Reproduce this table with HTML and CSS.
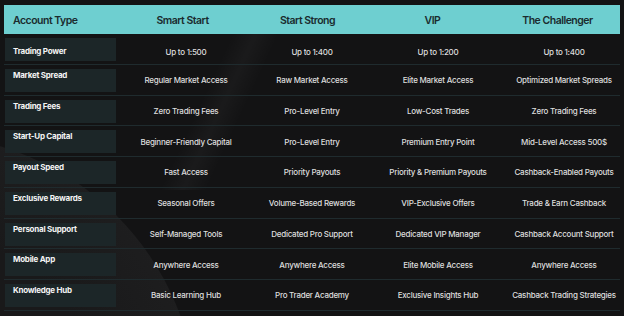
FILE: index.html
```html
<!DOCTYPE html>
<html>
<head>
<meta charset="utf-8">
<link rel="stylesheet" href="styles.css">
</head>
<body>
<div class="page">
  <div class="arc"></div>
  <div class="streak"></div>
  <div class="table">
    <div class="head">
      <div class="hcell first">Account Type</div>
      <div class="hcell">Smart Start</div>
      <div class="hcell">Start Strong</div>
      <div class="hcell">VIP</div>
      <div class="hcell">The Challenger</div>
    </div>
    <div class="row top">
      <div class="label"><span>Trading Power</span></div>
      <div class="val">Up to 1:500</div>
      <div class="val">Up to 1:400</div>
      <div class="val">Up to 1:200</div>
      <div class="val">Up to 1:400</div>
    </div>
    <div class="row">
      <div class="label"><span>Market Spread</span></div>
      <div class="val">Regular Market Access</div>
      <div class="val">Raw Market Access</div>
      <div class="val">Elite Market Access</div>
      <div class="val">Optimized Market Spreads</div>
    </div>
    <div class="row">
      <div class="label"><span>Trading Fees</span></div>
      <div class="val">Zero Trading Fees</div>
      <div class="val">Pro-Level Entry</div>
      <div class="val">Low-Cost Trades</div>
      <div class="val">Zero Trading Fees</div>
    </div>
    <div class="row">
      <div class="label"><span>Start-Up Capital</span></div>
      <div class="val">Beginner-Friendly Capital</div>
      <div class="val">Pro-Level Entry</div>
      <div class="val">Premium Entry Point</div>
      <div class="val">Mid-Level Access 500$</div>
    </div>
    <div class="row">
      <div class="label"><span>Payout Speed</span></div>
      <div class="val">Fast Access</div>
      <div class="val">Priority Payouts</div>
      <div class="val">Priority &amp; Premium Payouts</div>
      <div class="val">Cashback-Enabled Payouts</div>
    </div>
    <div class="row">
      <div class="label"><span>Exclusive Rewards</span></div>
      <div class="val">Seasonal Offers</div>
      <div class="val">Volume-Based Rewards</div>
      <div class="val">VIP-Exclusive Offers</div>
      <div class="val">Trade &amp; Earn Cashback</div>
    </div>
    <div class="row">
      <div class="label"><span>Personal Support</span></div>
      <div class="val">Self-Managed Tools</div>
      <div class="val">Dedicated Pro Support</div>
      <div class="val">Dedicated VIP Manager</div>
      <div class="val">Cashback Account Support</div>
    </div>
    <div class="row">
      <div class="label"><span>Mobile App</span></div>
      <div class="val">Anywhere Access</div>
      <div class="val">Anywhere Access</div>
      <div class="val">Elite Mobile Access</div>
      <div class="val">Anywhere Access</div>
    </div>
    <div class="row">
      <div class="label"><span>Knowledge Hub</span></div>
      <div class="val">Basic Learning Hub</div>
      <div class="val">Pro Trader Academy</div>
      <div class="val">Exclusive Insights Hub</div>
      <div class="val">Cashback Trading Strategies</div>
    </div>
  </div>
</div>
</body>
</html>
```

FILE: styles.css
```css
* { box-sizing: border-box; }
html, body {
  margin: 0;
  padding: 0;
  background: #131314;
  overflow: hidden;
}
body {
  font-family: Inter, "Liberation Sans", sans-serif;
}
.page {
  position: relative;
  width: 624px;
  height: 316px;
  overflow: hidden;
  background: #131314;
}
.arc {
  position: absolute;
  left: -353px;
  top: 135px;
  width: 550px;
  height: 550px;
  border-radius: 50%;
  background: radial-gradient(circle, #19191a 45%, #1f1f20 80%, #272728 97%, #232324 100%);
}
.streak {
  position: absolute;
  left: 150px;
  top: 10px;
  width: 150px;
  height: 180px;
  background: linear-gradient(115deg, rgba(255,255,255,0) 40%, rgba(255,255,255,0.03) 50%, rgba(255,255,255,0) 60%);
}
.table {
  position: relative;
  margin: 5px 0 0 4px;
  width: 616px;
}
.head {
  display: grid;
  grid-template-columns: 116px repeat(4, 125px);
  height: 29px;
  background: #6ecfd0;
  align-items: center;
}
.hcell {
  text-align: center;
  font-size: 10.5px;
  font-weight: 600;
  letter-spacing: -0.5px;
  color: #1a2b2e;
  padding-top: 1px;
}
.hcell.first {
  text-align: left;
  padding-left: 9px;
}
.row {
  display: grid;
  grid-template-columns: 119px repeat(4, 126px);
  height: 30.75px;
  border-bottom: 1px solid #1f2b2e;
  align-items: center;
}
.label {
  align-self: start;
  margin: 4px 0 0 1px;
  width: 111px;
  height: 23px;
  background: #1c2628;
  padding: 1px 0 0 8px;
  font-size: 8px;
  font-weight: 700;
  letter-spacing: -0.25px;
  color: #f4f4f4;
  line-height: 11px;
}
.row.top .label {
  display: flex;
  align-items: center;
  padding-top: 4px;
}
.row.top .val {
  padding-top: 7px;
}
.val {
  text-align: center;
  font-size: 8px;
  font-weight: 500;
  letter-spacing: -0.25px;
  color: #dedede;
  white-space: nowrap;
  padding-top: 1px;
}
```
